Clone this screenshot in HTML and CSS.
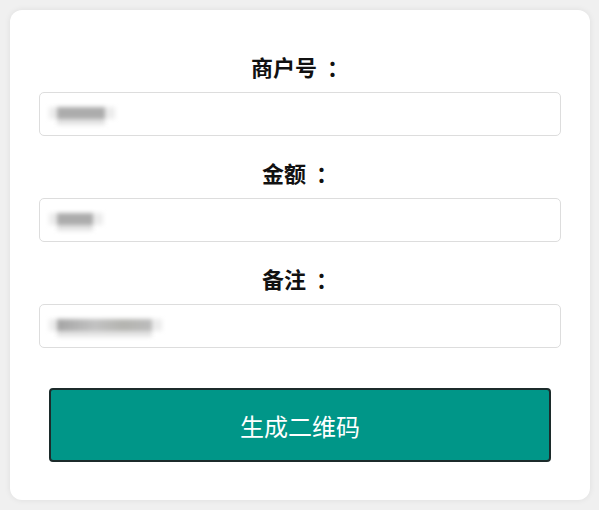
FILE: index.html
```html
<!DOCTYPE html>
<html lang="zh-CN">
<head>
<meta charset="utf-8">
<title>生成二维码</title>
<link rel="stylesheet" href="styles.css">
</head>
<body>
<div class="card">
  <div class="group">
    <label class="label">商户号<span class="colon">：</span></label>
    <div class="field"><span class="mask mask-1"></span></div>
  </div>
  <div class="group">
    <label class="label">金额<span class="colon">：</span></label>
    <div class="field"><span class="mask mask-2"></span></div>
  </div>
  <div class="group">
    <label class="label">备注<span class="colon">：</span></label>
    <div class="field"><span class="mask mask-3"></span></div>
  </div>
  <button class="btn">生成二维码</button>
</div>
</body>
</html>
```
FILE: styles.css
```css
html, body {
  margin: 0;
  padding: 0;
}
body {
  background: #f0f0f0;
  font-family: "Noto Sans CJK SC", "Noto Sans", sans-serif;
  padding: 10px 9px 10px 10px;
  box-sizing: border-box;
  height: 510px;
}
.card {
  background: #fff;
  border-radius: 12px;
  box-shadow: 0 0 6px rgba(0,0,0,0.08);
  height: 490px;
  box-sizing: border-box;
  padding: 44px 29px 0 29px;
  display: flex;
  flex-direction: column;
}
.group {
  display: flex;
  flex-direction: column;
  margin-bottom: 24px;
}
.label {
  display: flex;
  justify-content: center;
  align-items: center;
  height: 24px;
  font-family: "Noto Sans CJK SC", sans-serif;
  font-weight: bold;
  font-size: 22px;
  line-height: 24px;
  color: #111;
  margin-bottom: 14px;
  white-space: nowrap;
}
.colon {
  margin-left: 10px;
}
.field {
  height: 44px;
  box-sizing: border-box;
  border: 1px solid #ddd;
  border-radius: 5px;
  display: flex;
  align-items: center;
  padding-left: 17px;
}
.mask {
  display: block;
  height: 12px;
  margin-top: -2px;
  background: #acacac;
  filter: blur(2px);
  box-shadow: 0 6px 0 #e4e4e4, -8px 0 0 #ececec, 10px 0 0 #ececec;
}
.mask-1 { width: 48px; }
.mask-2 { width: 36px; }
.mask-3 { width: 95px; background: linear-gradient(90deg, #a4a4a4, #c2c2c2 40%, #b4b4b0 70%, #bcbcbc); }
.btn {
  margin: 16px 10px 0 10px;
  height: 74px;
  background: #009688;
  color: #fff;
  border: 2px solid #1c2b2b;
  border-radius: 4px;
  font-family: "Noto Sans CJK SC", sans-serif;
  font-size: 24px;
  cursor: pointer;
}
```
